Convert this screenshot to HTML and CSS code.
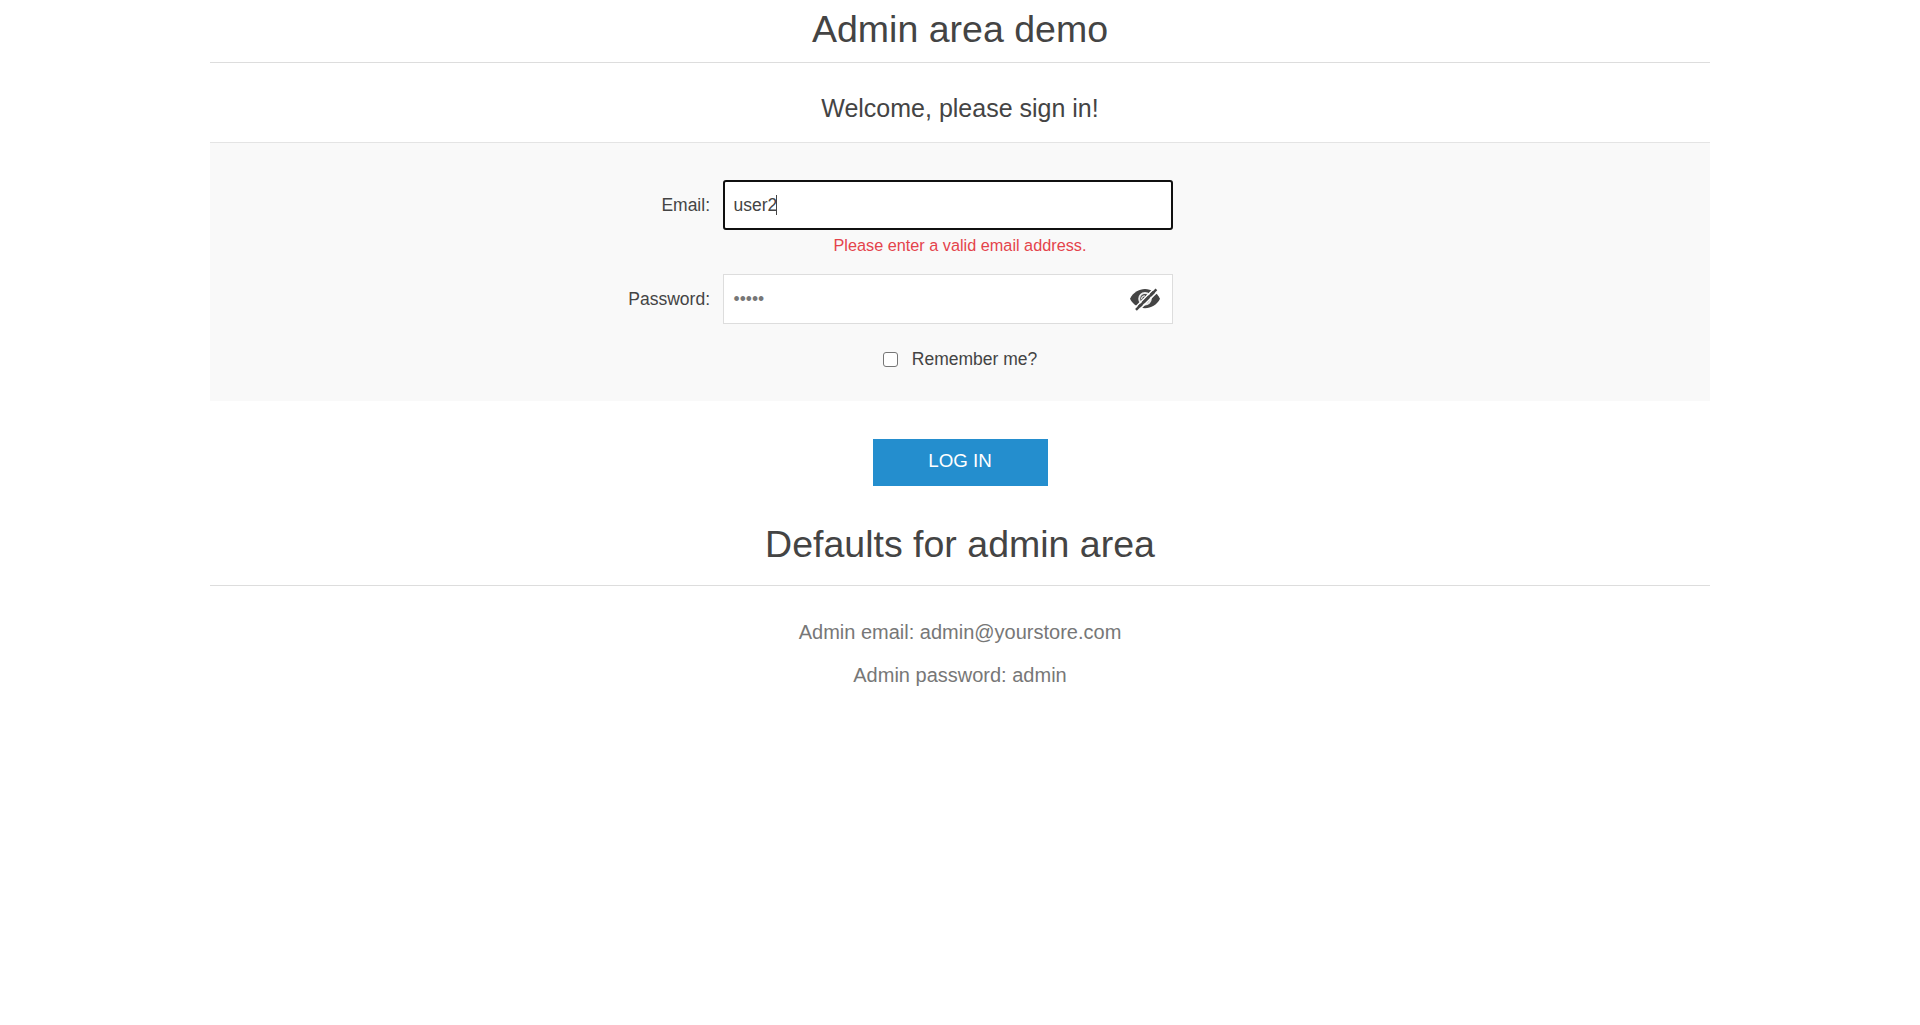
FILE: index.html
```html
<!DOCTYPE html>
<html lang="en">
<head>
<meta charset="utf-8">
<title>Admin area demo</title>
<link rel="stylesheet" href="styles.css">
</head>
<body>
<main class="page">
  <h1 class="title">Admin area demo</h1>
  <h2 class="welcome">Welcome, please sign in!</h2>
  <form class="panel">
    <div class="row">
      <span class="label">Email:</span>
      <div class="field field-focused"><span>user2</span><i class="caret"></i></div>
    </div>
    <div class="error">Please enter a valid email address.</div>
    <div class="row">
      <span class="label">Password:</span>
      <div class="field">
        <span class="dots">•••••</span>
        <svg class="eye" width="32" height="24" viewBox="0 0 32 24">
          <path d="M1 11.700C4 5.500 10 2 16 2s12 3.500 15 9.700C28 17.800 22 21.200 16 21.200S4 17.800 1 11.700z" fill="#444"/>
          <circle cx="16" cy="11.700" r="5.800" fill="none" stroke="#e8e8e8" stroke-width="2"/>
          <path d="M12.600 12.200c0-2.200 1.200-3.400 3.400-3.400" fill="none" stroke="#ddd" stroke-width="1.300"/>
          <path d="M4.900 21.700L25.400 1.200M9.200 23.900L29.500 3.600" stroke="#fff" stroke-width="1.500"/>
          <path d="M7 22.800L27.400 2.400" stroke="#444" stroke-width="2.400"/>
        </svg>
      </div>
    </div>
    <label class="remember"><span class="checkbox"></span>Remember me?</label>
  </form>
  <button class="login" type="button">LOG IN</button>
  <h2 class="title defaults">Defaults for admin area</h2>
  <p class="info">Admin email: admin@yourstore.com</p>
  <p class="info">Admin password: admin</p>
</main>
</body>
</html>
```

FILE: styles.css
```css
* { box-sizing: border-box; }
body {
  margin: 0;
  background: #fff;
  color: #444;
  font-family: "Liberation Sans", Arial, sans-serif;
  font-size: 17.5px;
}
.page { width: 1500px; margin: 0 auto; text-align: center; }
.title {
  margin: 0;
  padding-bottom: 4px;
  border-bottom: 1px solid #ddd;
  font-size: 37.5px;
  font-weight: normal;
  line-height: 58px;
}
.welcome {
  margin: 0;
  padding: 27px 0 15px;
  font-size: 25px;
  font-weight: normal;
  line-height: 37px;
}
.panel {
  height: 259px;
  padding-top: 37px;
  border-top: 1px solid #e4e4e4;
  background: #f9f9f9;
}
.row { display: flex; align-items: center; height: 50px; }
.label { width: 500px; margin-right: 13px; text-align: right; }
.field {
  display: flex;
  align-items: center;
  width: 450px;
  height: 50px;
  padding: 0 10px 0 9.500px;
  border: 1px solid #ddd;
  background: #fff;
}
.field-focused { padding: 0 8.500px; border: 2px solid #101010; border-radius: 3px; }
.caret { width: 1px; height: 20px; margin-left: -1px; background: #444; }
.dots { color: #777; }
.eye { margin-left: auto; margin-right: 1px; }
.error {
  height: 44px;
  padding-top: 5px;
  color: #e4434b;
  font-size: 16.25px;
  line-height: 21px;
}
.remember {
  display: flex;
  justify-content: center;
  align-items: center;
  height: 20px;
  margin-top: 25px;
}
.checkbox {
  width: 15px;
  height: 15px;
  margin-right: 14px;
  border: 1px solid #767676;
  border-radius: 3px;
  background: #fff;
}
.login {
  display: block;
  width: 175px;
  height: 47px;
  margin: 38px auto 0;
  padding: 0 0 3px;
  border: 0;
  background: #248ece;
  color: #fff;
  font: 18.75px "Liberation Sans", Arial, sans-serif;
}
.defaults { margin: 29px 0 33px; padding-bottom: 12px; }
.info { margin: 0 0 17px; color: #777; font-size: 20px; line-height: 26px; }
```
